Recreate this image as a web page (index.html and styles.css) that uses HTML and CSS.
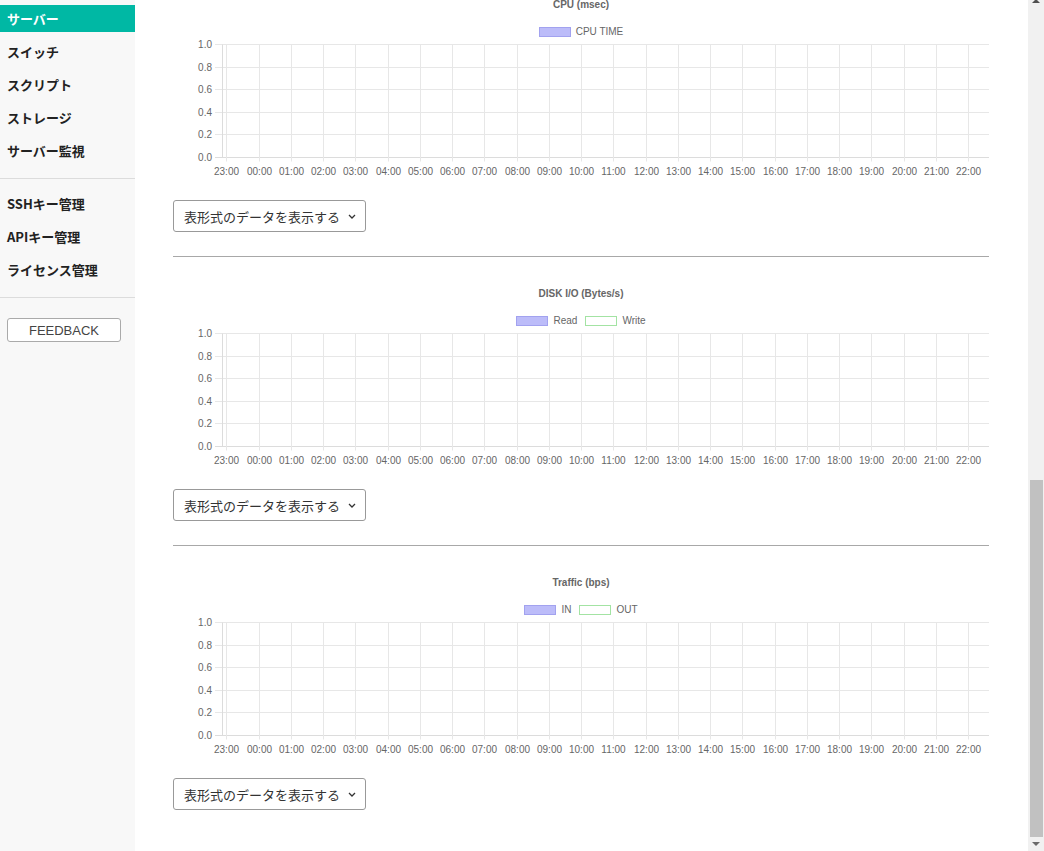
FILE: index.html
```html
<!DOCTYPE html>
<html lang="ja">
<head>
<meta charset="utf-8">
<title>サーバー</title>
<link rel="stylesheet" href="styles.css">
</head>
<body>
<div class="layout">
  <aside class="sidebar">
    <nav class="nav-group first">
      <a class="nav-item active">サーバー</a>
      <a class="nav-item">スイッチ</a>
      <a class="nav-item">スクリプト</a>
      <a class="nav-item">ストレージ</a>
      <a class="nav-item">サーバー監視</a>
    </nav>
    <div class="side-sep"></div>
    <nav class="nav-group">
      <a class="nav-item">SSHキー管理</a>
      <a class="nav-item">APIキー管理</a>
      <a class="nav-item">ライセンス管理</a>
    </nav>
    <div class="side-sep"></div>
    <div class="feedback-wrap"><button class="feedback">FEEDBACK</button></div>
  </aside>

  <main class="content">
    <section class="chart-section">
      <div class="chart-title">CPU (msec)</div>
      <div class="legend">
        <span class="legend-item"><span class="swatch blue"></span>CPU TIME</span>
      </div>
      <svg class="plot" width="816" height="144" viewBox="0 0 816 144"></svg>
      <button class="table-toggle">表形式のデータを表示する<svg class="chev" width="8" height="5" viewBox="0 0 8 5"><polyline points="1,1 4,4 7,1" fill="none" stroke="#333" stroke-width="1.3"/></svg></button>
    </section>

    <section class="chart-section">
      <div class="chart-title">DISK I/O (Bytes/s)</div>
      <div class="legend">
        <span class="legend-item"><span class="swatch blue"></span>Read</span>
        <span class="legend-item"><span class="swatch green"></span>Write</span>
      </div>
      <svg class="plot" width="816" height="144" viewBox="0 0 816 144"></svg>
      <button class="table-toggle">表形式のデータを表示する<svg class="chev" width="8" height="5" viewBox="0 0 8 5"><polyline points="1,1 4,4 7,1" fill="none" stroke="#333" stroke-width="1.3"/></svg></button>
    </section>

    <section class="chart-section">
      <div class="chart-title">Traffic (bps)</div>
      <div class="legend">
        <span class="legend-item"><span class="swatch blue"></span>IN</span>
        <span class="legend-item"><span class="swatch green"></span>OUT</span>
      </div>
      <svg class="plot" width="816" height="144" viewBox="0 0 816 144"></svg>
      <button class="table-toggle">表形式のデータを表示する<svg class="chev" width="8" height="5" viewBox="0 0 8 5"><polyline points="1,1 4,4 7,1" fill="none" stroke="#333" stroke-width="1.3"/></svg></button>
    </section>
  </main>

  <div class="scrollbar">
    <span class="arrow up"></span>
    <span class="thumb"></span>
    <span class="arrow down"></span>
  </div>
</div>
<script src="script.js"></script>
</body>
</html>
```

FILE: styles.css
```css
* { box-sizing: border-box; }
html, body {
  margin: 0;
  padding: 0;
  height: 100%;
  overflow: hidden;
  background: #fff;
}
body {
  font-family: "Noto Sans CJK JP", "Liberation Sans", sans-serif;
  color: #222;
}
.layout {
  display: flex;
  height: 851px;
}
.sidebar {
  width: 135px;
  flex: 0 0 135px;
  background: #f8f8f8;
  height: 851px;
}
.nav-group {
  display: flex;
  flex-direction: column;
  gap: 6px;
  padding-top: 11px;
}
.nav-group.first { padding-top: 5px; }
.nav-item {
  display: block;
  height: 27px;
  line-height: 27px;
  padding-left: 7px;
  font-size: 13px;
  font-weight: bold;
  color: #222;
  white-space: nowrap;
}
.nav-item.active {
  background: #00b8a4;
  color: #fff;
}
.side-sep {
  margin-top: 14px;
  height: 1px;
  background: #dcdcdc;
}
.feedback-wrap {
  padding: 20px 0 0 7px;
}
.feedback {
  display: block;
  width: 114px;
  height: 24px;
  background: #fff;
  border: 1px solid #aaa;
  border-radius: 3px;
  font-family: "Liberation Sans", Arial, sans-serif;
  font-size: 13px;
  color: #444;
  padding: 0;
}

.content {
  flex: 1;
  padding-left: 38px;
  margin-top: -33px;
}
.chart-section {
  width: 816px;
  border-top: 1px solid #a8a8a8;
  padding-top: 31px;
  padding-bottom: 24px;
}
.chart-title {
  height: 12px;
  line-height: 12px;
  text-align: center;
  font-family: "Liberation Sans", Arial, sans-serif;
  font-weight: bold;
  font-size: 10px;
  color: #666;
}
.legend {
  margin-top: 15px;
  height: 12px;
  display: flex;
  justify-content: center;
  gap: 8px;
  font-family: "Liberation Sans", Arial, sans-serif;
  font-size: 10px;
  line-height: 12px;
  color: #666;
}
.legend-item {
  display: flex;
  align-items: center;
  gap: 5px;
}
.swatch {
  display: inline-block;
  width: 32px;
  height: 10px;
  border: 1px solid;
}
.swatch.blue {
  background: #bcbcf9;
  border-color: #a2a2ef;
}
.swatch.green {
  background: #fff;
  border-color: #a3e3a3;
}
.plot {
  display: block;
}
.plot .grid {
  stroke: #e7e7e7;
  stroke-width: 1;
}
.plot .axis {
  stroke: #dcdcdc;
  stroke-width: 1;
}
.plot .tick {
  font-family: "Liberation Sans", Arial, sans-serif;
  font-size: 10px;
  fill: #666;
}
.table-toggle {
  margin-top: 18px;
  width: 193px;
  height: 32px;
  display: flex;
  align-items: center;
  gap: 8px;
  padding: 0 0 0 10px;
  background: #fff;
  border: 1px solid #999;
  border-radius: 3px;
  font-family: "Noto Sans CJK JP", sans-serif;
  font-size: 13px;
  color: #333;
  white-space: nowrap;
}
.chev { display: block; margin-top: 1px; flex: 0 0 auto; }

.scrollbar {
  position: fixed;
  top: 0;
  right: 0;
  width: 16px;
  height: 851px;
  background: #f1f1f1;
}
.thumb {
  position: absolute;
  left: 2px;
  top: 480px;
  width: 13px;
  height: 357px;
  background: #c1c1c1;
}
.arrow {
  position: absolute;
  left: 4px;
  width: 0;
  height: 0;
  border-left: 4px solid transparent;
  border-right: 4px solid transparent;
}
.arrow.up {
  top: -1px;
  border-bottom: 4px solid #505050;
}
.arrow.down {
  top: 842px;
  border-top: 4px solid #6a6a6a;
}
```

FILE: script.js
```js
(function () {
  var NS = 'http://www.w3.org/2000/svg';
  var W = 816;
  var STEP = 32.26;
  function el(tag, attrs, text) {
    var e = document.createElementNS(NS, tag);
    for (var k in attrs) e.setAttribute(k, attrs[k]);
    if (text != null) e.textContent = text;
    return e;
  }
  var yLabels = ['1.0', '0.8', '0.6', '0.4', '0.2', '0.0'];
  document.querySelectorAll('svg.plot').forEach(function (svg) {
    var top = 6.5, bottom = 119.5;
    yLabels.forEach(function (t, j) {
      var y = Math.round(6 + j * 22.6) + 0.5;
      svg.appendChild(el('line', { x1: 42, x2: W, y1: y, y2: y, 'class': j === 5 ? 'axis' : 'grid' }));
      svg.appendChild(el('text', { x: 39, y: y + 3.5, 'text-anchor': 'end', 'class': 'tick' }, t));
    });
    for (var k = 0; k < 24; k++) {
      var x = Math.round(53.3 + k * STEP) + 0.5;
      svg.appendChild(el('line', { x1: x, x2: x, y1: top, y2: 123.5, 'class': 'grid' }));
      var h = (23 + k) % 24;
      svg.appendChild(el('text', { x: x, y: 137, 'text-anchor': 'middle', 'class': 'tick' }, (h < 10 ? '0' : '') + h + ':00'));
    }
    svg.appendChild(el('line', { x1: 49.5, x2: 49.5, y1: top, y2: bottom, 'class': 'axis' }));
  });
})();
```
